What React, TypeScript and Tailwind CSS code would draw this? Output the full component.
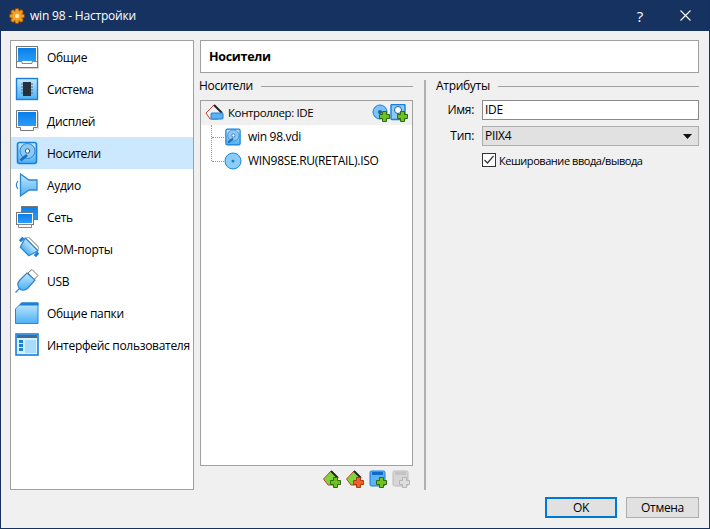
import type { ReactNode } from "react";

const Defs = () => (
  <svg width="0" height="0" className="absolute">
    <defs>
      <linearGradient id="scr" x1="0" y1="0" x2="0" y2="1">
        <stop offset="0" stopColor="#0a7de8" />
        <stop offset="1" stopColor="#2a9df8" />
      </linearGradient>
      <linearGradient id="pale" x1="0" y1="0" x2="0" y2="1">
        <stop offset="0" stopColor="#c4e8ff" />
        <stop offset="1" stopColor="#4cb0f4" />
      </linearGradient>
    </defs>
  </svg>
);

const Ic = ({ children, size = 24 }: { children: ReactNode; size?: number }) => (
  <svg width={size} height={size} viewBox="0 0 24 24" className="shrink-0">
    {children}
  </svg>
);

const GeneralIcon = () => (
  <Ic>
    <rect x="1.5" y="1.5" width="21" height="21" fill="#fff" stroke="#777" />
    <rect x="3" y="3" width="18" height="13" fill="url(#scr)" />
    <path d="M2 16.5h5v2h10v-2h5" fill="none" stroke="#888" />
    <path d="M23.5 3v20.5H3" fill="none" stroke="#d4d4d4" />
  </Ic>
);

const SystemIcon = () => (
  <Ic>
    <rect x="1.5" y="1.5" width="21" height="21" fill="url(#pale)" stroke="#1a7fd8" strokeWidth="1.4" />
    <path d="M6 7h12M6 10h12M6 13h12M6 16h12" stroke="#55708a" strokeWidth="1.2" />
    <rect x="8" y="5" width="8" height="14" fill="#26303c" />
  </Ic>
);

const DisplayIcon = () => (
  <Ic>
    <path d="M1.5 1.5h21v17h-4v3h-13v-3h-4z" fill="#fff" stroke="#777" />
    <rect x="3" y="3" width="18" height="14" fill="url(#scr)" />
    <path d="M23.5 3v17h-4" fill="none" stroke="#d4d4d4" />
  </Ic>
);

const DiskIcon = ({ size = 24 }: { size?: number }) => (
  <Ic size={size}>
    <rect x="2.5" y="1.5" width="19" height="21" rx="2" fill="url(#pale)" stroke="#1a7fd8" strokeWidth="1.6" />
    <circle cx="12.5" cy="10" r="7.5" fill="#8cc9f4" stroke="#2b86cf" />
    <circle cx="12.5" cy="10" r="2.2" fill="#fff" stroke="#1d5f9c" />
    <path d="M5.5 19.5l6.5-5.5" stroke="#1b6eb8" strokeWidth="2.8" />
  </Ic>
);

const AudioIcon = () => (
  <Ic>
    <path d="M5.500 1l8.500 6h8v10h-8l-8.500 6z" fill="url(#pale)" stroke="#2b86cf" strokeWidth="1.3" />
    <path d="M3 8c-2 2.500-2 5.500 0 8" fill="none" stroke="#2b86cf" strokeWidth="1.2" />
  </Ic>
);

const NetIcon = () => (
  <Ic>
    <rect x="6.5" y="1.5" width="16" height="13" fill="url(#scr)" stroke="#777" />
    <rect x="1.5" y="7.5" width="17" height="12" fill="#fff" stroke="#777" />
    <rect x="3" y="9" width="14" height="9" fill="url(#scr)" />
    <path d="M3.5 19.5h13v3h-13z" fill="#fff" stroke="#888" />
  </Ic>
);

const ComIcon = () => (
  <Ic>
    <g transform="rotate(45 12 12)">
      <path d="M4 2.500h16v3H4z" fill="#fff" stroke="#999" />
      <path d="M3 5.500h18l-3 10H6z" fill="url(#pale)" stroke="#2b86cf" strokeWidth="1.2" />
      <path d="M0 6.500h3v5H0zM21 6.500h3v5h-3z" fill="#1a7fd8" />
    </g>
  </Ic>
);

const UsbIcon = () => (
  <Ic>
    <path d="M13 4l4-3.500 6 6-4 4z" fill="#fff" stroke="#777" />
    <path d="M12 4l8 7-7 8c-3 3-7 3-9 0s-1-6 1-8z" fill="url(#pale)" stroke="#2b86cf" strokeWidth="1.2" />
    <path d="M5 19l-4.500 4.500" stroke="#2b86cf" strokeWidth="1.2" />
  </Ic>
);

const FolderIcon = () => (
  <Ic>
    <path d="M0.500 8l6-6h16.500v20.500H0.500z" fill="url(#pale)" stroke="#2b86cf" />
    <path d="M6.500 1.500h17v3H4z" fill="#1a7fd8" />
  </Ic>
);

const UiIcon = () => (
  <Ic>
    <rect x="1" y="1" width="22" height="21" fill="#d8effd" stroke="#1a7fd8" strokeWidth="1.6" />
    <rect x="2" y="2" width="20" height="3" fill="#3c6e9c" />
    <rect x="4" y="7" width="4" height="3" fill="#1a7fd8" />
    <rect x="4" y="11" width="4" height="3" fill="#1a7fd8" />
    <rect x="4" y="15" width="4" height="3" fill="#1a7fd8" />
    <rect x="10" y="7" width="11" height="13" fill="#a9dcfa" />
  </Ic>
);

const Plus = ({ x, y, fill = "#6fc11f", stroke = "#2f6b10" }: { x: number; y: number; fill?: string; stroke?: string }) => (
  <path d={`M${x + 3} ${y}h4v3h3v4h-3v3h-4v-3h-3v-4h3z`} fill={fill} stroke={stroke} strokeWidth="1" />
);

const AddCd = () => (
  <svg width="18" height="18" viewBox="0 0 18 18">
    <circle cx="8" cy="8" r="7" fill="#79c3f5" stroke="#1a7fd8" />
    <circle cx="8" cy="8" r="2" fill="#1d5f9c" />
    <Plus x={7.5} y={7.5} />
  </svg>
);

const AddHd = () => (
  <svg width="18" height="18" viewBox="0 0 18 18">
    <rect x="1" y="0.500" width="14" height="15" rx="1" fill="#8cc9f4" stroke="#1a7fd8" strokeWidth="1.4" />
    <circle cx="8" cy="6" r="3.500" fill="#fff" stroke="#1d5f9c" />
    <Plus x={7.5} y={7.5} />
  </svg>
);

const Diamond = ({ plusFill, plusStroke }: { plusFill: string; plusStroke: string }) => (
  <svg width="18" height="18" viewBox="0 0 18 18">
    <path d="M0.500 9l7.500-8 7 7-5 7H5z" fill="#7fd43c" stroke="#c2452a" />
    <path d="M8 1l7 7" stroke="#222" strokeWidth="1.8" />
    <Plus x={7.5} y={7.5} fill={plusFill} stroke={plusStroke} />
  </svg>
);

const AddAttach = () => (
  <svg width="18" height="18" viewBox="0 0 18 18">
    <rect x="1" y="1" width="15" height="15" rx="1.500" fill="#5cb2f4" stroke="#1a7fd8" />
    <rect x="3" y="2" width="11" height="3" fill="#0d6bd0" />
    <Plus x={7.5} y={7.5} />
  </svg>
);

const RemoveAttach = () => (
  <svg width="18" height="18" viewBox="0 0 18 18">
    <rect x="1" y="1" width="15" height="15" rx="1.500" fill="#d6d6d6" stroke="#bcbcbc" />
    <rect x="3" y="2" width="11" height="3" fill="#c4c4c4" />
    <Plus x={7.5} y={7.5} fill="#dedede" stroke="#b5b5b5" />
  </svg>
);

const ControllerIcon = () => (
  <svg width="20" height="20" viewBox="0 0 20 20" className="shrink-0">
    <path d="M1 10l8-8 8 8-4 6H5z" fill="#f4f4f4" stroke="#c2452a" />
    <path d="M9 2l8 8" stroke="#222" strokeWidth="2" />
    <rect x="6" y="10" width="12" height="6" rx="1" fill="#5cb2f4" stroke="#1a7fd8" />
  </svg>
);

const CdIcon = () => (
  <svg width="18" height="18" viewBox="0 0 18 18" className="shrink-0">
    <circle cx="9" cy="9" r="8" fill="#8ccdf8" stroke="#1a8ae0" />
    <circle cx="9" cy="9" r="1.500" fill="#1a7fd8" />
  </svg>
);

const AppIcon = () => (
  <svg width="16" height="16" viewBox="0 0 16 16" className="mr-[5px] shrink-0">
    <g fill="#f09a1e" stroke="#8a3f0a" strokeWidth="0.8">
      <circle cx="8" cy="2.500" r="2.200" />
      <circle cx="8" cy="13.500" r="2.200" />
      <circle cx="2.500" cy="8" r="2.200" />
      <circle cx="13.500" cy="8" r="2.200" />
      <circle cx="4" cy="4" r="2.200" />
      <circle cx="12" cy="4" r="2.200" />
      <circle cx="4" cy="12" r="2.200" />
      <circle cx="12" cy="12" r="2.200" />
    </g>
    <circle cx="8" cy="8" r="5" fill="#f3a322" />
    <circle cx="8" cy="8" r="2.200" fill="#ffe9a8" />
  </svg>
);

const sections = [
  { name: "Общие", icon: <GeneralIcon /> },
  { name: "Система", icon: <SystemIcon /> },
  { name: "Дисплей", icon: <DisplayIcon /> },
  { name: "Носители", icon: <DiskIcon />, active: true },
  { name: "Аудио", icon: <AudioIcon /> },
  { name: "Сеть", icon: <NetIcon /> },
  { name: "COM-порты", icon: <ComIcon /> },
  { name: "USB", icon: <UsbIcon /> },
  { name: "Общие папки", icon: <FolderIcon /> },
  { name: "Интерфейс пользователя", icon: <UiIcon /> },
];

const GroupTitle = ({ title }: { title: string }) => (
  <div className="flex items-center gap-2 h-4">
    <span>{title}</span>
    <div className="flex-1 h-0 border-t border-[#a0a0a0]" />
  </div>
);

export default function App() {
  return (
    <div className="w-[710px] h-[529px] flex flex-col bg-[#f0f0f0] border-x border-b border-[#16315e] text-[12px] leading-4 text-black overflow-hidden font-['Open_Sans','Noto_Sans',sans-serif] tracking-[-0.3px]">
      <Defs />
      <div className="h-[31px] shrink-0 bg-[#163260] flex items-center pl-2 text-white text-[12px] tracking-[-0.2px]">
        <AppIcon />
        <span>win 98 - Настройки</span>
        <span className="ml-auto mr-[37px] text-[15px]">?</span>
        <svg width="11" height="11" viewBox="0 0 11 11" className="mr-[18px]">
          <path d="M0.500 0.500l10 10M10.500 0.500l-10 10" stroke="#fff" strokeWidth="1.1" />
        </svg>
      </div>

      <div className="flex-1 flex flex-col pt-[9px] pl-[9px] pr-[10px] pb-[10px] min-h-0">
        <div className="flex-1 flex gap-[6px] min-h-0">
          <div className="w-[184px] h-[450px] shrink-0 bg-white border border-[#a0a0a0] flex flex-col">
            {sections.map((s) => (
              <div key={s.name} className={`h-[32px] flex items-center pl-[4px] ${s.active ? "bg-[#cce8ff]" : ""}`}>
                {s.icon}
                <span className="ml-[8px] pt-[2px] whitespace-nowrap">{s.name}</span>
              </div>
            ))}
          </div>

          <div className="flex-1 flex flex-col min-w-0">
            <div className="h-[33px] bg-white border border-[#a0a0a0] flex items-center pl-[8px] font-bold text-[12.5px]">
              Носители
            </div>
            <div className="flex mt-[5px] flex-1 min-h-0">
              <div className="w-[213px] shrink-0 flex flex-col">
                <div className="-ml-px">
                  <GroupTitle title="Носители" />
                </div>
                <div className="mt-[6px] h-[366px] bg-white border border-[#a0a0a0]">
                  <div className="h-[24px] bg-[#f0f0f0] flex items-center pl-[4px] pr-[4px]">
                    <ControllerIcon />
                    <span className="ml-[3px] text-[11.5px] tracking-[-0.4px]">Контроллер: IDE</span>
                    <div className="ml-auto flex">
                      <AddCd />
                      <AddHd />
                    </div>
                  </div>
                  <div className="ml-[10px] border-l border-dotted border-[#999] h-[36px] flex flex-col">
                    <div className="h-[24px] flex items-center shrink-0">
                      <div className="w-[12px] border-t border-dotted border-[#999]" />
                      <DiskIcon size={18} />
                      <span className="ml-[6px]">win 98.vdi</span>
                    </div>
                    <div className="h-[24px] flex items-center shrink-0">
                      <div className="w-[12px] border-t border-dotted border-[#999]" />
                      <CdIcon />
                      <span className="ml-[6px] whitespace-nowrap">WIN98SE.RU(RETAIL).ISO</span>
                    </div>
                  </div>
                </div>
                <div className="mt-[4px] flex justify-end gap-[5px] pr-[3px]">
                  <Diamond plusFill="#6fc11f" plusStroke="#2f6b10" />
                  <Diamond plusFill="#f0602a" plusStroke="#b03a10" />
                  <AddAttach />
                  <RemoveAttach />
                </div>
              </div>

              <div className="w-[2px] ml-[11px] mt-[2px] h-[410px] bg-[#b0b0b0]" />

              <div className="flex-1 flex flex-col ml-[10px] min-w-0">
                <GroupTitle title="Атрибуты" />
                <div className="mt-[6px] flex items-center h-[20px]">
                  <span className="w-[38px] text-right">Имя:</span>
                  <div className="ml-[8px] flex-1 h-[20px] bg-white border border-[#8a8a8a] flex items-center pl-[2px]">IDE</div>
                </div>
                <div className="mt-[6px] flex items-center h-[20px]">
                  <span className="w-[38px] text-right">Тип:</span>
                  <div className="ml-[8px] flex-1 h-[20px] bg-[#e1e1e1] border border-[#adadad] flex items-center pl-[2px] pr-[6px]">
                    <span>PIIX4</span>
                    <svg width="9" height="5" viewBox="0 0 9 5" className="ml-auto">
                      <path d="M0 0h9L4.500 5z" fill="#111" />
                    </svg>
                  </div>
                </div>
                <div className="mt-[7px] ml-[46px] flex items-center h-[14px]">
                  <div className="w-[14px] h-[14px] bg-white border border-[#333] flex items-center justify-center">
                    <svg width="12" height="12" viewBox="0 0 12 12">
                      <path d="M1.500 6l3 3 6-7" fill="none" stroke="#333" strokeWidth="1.2" />
                    </svg>
                  </div>
                  <span className="ml-[3px] pt-[2px] whitespace-nowrap text-[11px] tracking-[-0.45px]">Кеширование ввода/вывода</span>
                </div>
              </div>
            </div>
          </div>
        </div>
        <div className="flex justify-end gap-[9px] mt-[6px] shrink-0">
          <div className="w-[72px] h-[21px] bg-[#e1e1e1] border-2 border-[#0078d7] flex items-center justify-center">OK</div>
          <div className="w-[73px] h-[21px] bg-[#e1e1e1] border border-[#adadad] flex items-center justify-center">Отмена</div>
        </div>
      </div>
    </div>
  );
}
